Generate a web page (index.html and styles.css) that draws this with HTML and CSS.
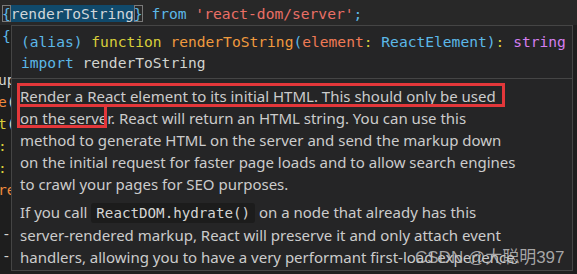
FILE: index.html
```html
<!DOCTYPE html>
<html lang="en">
<head>
	<meta charset="UTF-8">
	<meta name="viewport" content="width=device-width, initial-scale=1.0">
	<title>renderToString hover</title>
	<link rel="stylesheet" href="styles.css">
</head>
<body>
<div class="editor">
	<div class="line current"><span class="bracket">{</span><span class="sel">renderToString</span><span class="bracket">}</span> <span class="kw">from</span> <span class="str">'react-dom/server'</span><span class="kw">;</span></div>
	<!-- only the first columns of these lines peek out beside the popup -->
	<div class="rest">
		<div class="line"><span class="kw">{</span></div>
		<div class="line">&nbsp;</div>
		<div class="line shift"><span class="plain">up</span></div>
		<div class="line shift"><span class="org">e</span><span class="plain">(</span></div>
		<div class="line shift"><span class="yel">t</span><span class="plain">(</span></div>
		<div class="line shift"><span class="yel">:</span></div>
		<div class="line shift"><span class="yel">:</span></div>
		<div class="line shift"><span class="org">re</span></div>
		<div class="line">&nbsp;</div>
		<div class="line"><span class="plain">-</span></div>
		<div class="line"><span class="plain">-</span></div>
	</div>
</div>

<!-- Hover popup over the editor -->
<div class="hover">
	<div class="hover-head">
		<div class="sig"><span class="kw">(alias)</span> <span class="fn-kw">function</span> <span class="fn">renderToString</span><span class="kw">(</span><span class="param">element</span><span class="fn-kw">:</span> <span class="kw">ReactElement</span><span class="kw">)</span><span class="fn-kw">:</span> <span class="type">string</span></div>
		<div class="sig"><span class="kw">import</span> <span class="plain">renderToString</span></div>
	</div>
	<div class="hover-doc">
		<p>Render a React element to its initial HTML. This should only be used<br>
		on the server. React will return an HTML string. You can use this<br>
		method to generate HTML on the server and send the markup down<br>
		on the initial request for faster page loads and to allow search engines<br>
		to crawl your pages for SEO purposes.</p>
		<p>If you call <code>ReactDOM.hydrate()</code> on a node that already has this<br>
		server-rendered markup, React will preserve it and only attach event<br>
		handlers, allowing you to have a very performant first-load experience.</p>
	</div>
</div>

<div class="mark mark-one"></div>
<div class="mark mark-two"></div>
<div class="watermark">CSDN @大聪明397</div>
</body>
</html>
```

FILE: styles.css
```css
body {
	margin: 0;
	background-color: #1e1e1e;
	overflow: hidden;
}
.editor {
	padding-top: 3px;
	font-family: "DejaVu Sans Mono", monospace;
	font-size: 14.6px;
	line-height: 22px;
	color: #cfd3d6;
}
.line {
	padding-left: 2px;
	white-space: pre;
}
.current {
	background-color: #282828;
	margin-top: -3px;
	padding-top: 3px;
}
.rest {
	width: 11px;
	overflow: hidden;
}
.shift {
	margin-left: -4px;
}
.bracket {
	color: #5cb8e8;
	outline: 1px solid #7a7a7a;
	outline-offset: -1px;
}
.sel {
	background-color: #104a6c;
	color: #d0d6da;
}
.kw {
	color: #5cb8e8; /* light blue */
}
.str {
	color: #ea6f66;
}
.plain {
	color: #d2d4cf;
}
.org {
	color: #f08a3c;
}
.yel {
	color: #d8cf3a;
}
.fn-kw {
	color: #d8cf3a;
}
.fn {
	color: #f09a3e;
}
.param {
	color: #ef7a55;
}
.type {
	color: #d47ef0;
}

/* hover widget */
.hover {
	position: absolute;
	left: 11px;
	top: 25px;
	width: 560px;
	height: 244px;
	background-color: #252526;
	border: 1px solid #454545;
	overflow: hidden;
}
.hover-head {
	padding: 5px 9px 5px 9px;
	border-bottom: 1px solid #454545;
	font-family: "DejaVu Sans Mono", monospace;
	font-size: 14.6px;
	line-height: 21px;
}
.sig {
	white-space: pre;
}
.hover-doc {
	padding: 6px 9px 0 8px;
	font-family: "Noto Sans", sans-serif;
	font-size: 15px;
	line-height: 22px;
	color: #cccccc;
	white-space: nowrap;
}
.hover-doc p {
	margin: 0 0 6px 0;
}
code {
	font-family: "DejaVu Sans Mono", monospace;
	font-size: 14.2px;
	background-color: #1c1c1c;
	border-radius: 3px;
	padding: 2px 5px;
	color: #d4d4d4;
}

/* red annotation boxes */
.mark {
	position: absolute;
	border: 3px solid #e3373a;
}
.mark-one {
	left: 17px;
	top: 83px;
	width: 482px;
	height: 18px;
}
.mark-two {
	left: 17px;
	top: 106px;
	width: 84px;
	height: 19px;
	border-top: none;
}
.watermark {
	position: absolute;
	left: 415px;
	top: 243px;
	font-family: "Liberation Sans", "Noto Sans CJK SC", sans-serif;
	font-size: 17px;
	color: rgba(190, 190, 190, 0.85);
}
```
